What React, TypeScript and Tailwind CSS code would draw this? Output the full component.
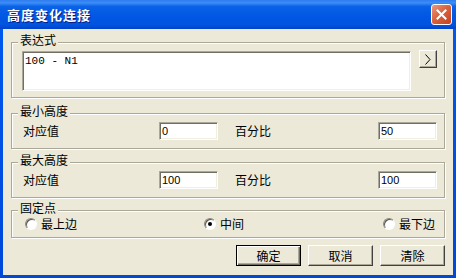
import React from 'react';

const cjk = "font-['SimSun','Noto_Sans_CJK_SC',sans-serif]";

function Group({ title, className, children }: { title: string; className?: string; children: React.ReactNode }) {
  return (
    <fieldset
      className={`border border-[#ACA899] shadow-[inset_1px_1px_0_#fff,1px_1px_0_#fff] ${className ?? ''}`}
    >
      <legend className="ml-[6px] px-[2px] pb-[4px] text-[12px] leading-[12px] text-black bg-[#ECE9D8]">
        {title}
      </legend>
      {children}
    </fieldset>
  );
}

function Field({ value }: { value: string }) {
  return (
    <input
      readOnly
      defaultValue={value}
      className="w-[59px] h-[18px] bg-white border border-t-[#ACA899] border-l-[#ACA899] border-r-white border-b-white shadow-[inset_1px_1px_0_#716F64,inset_-1px_-1px_0_#F1EFE2] pl-[2px] font-['Liberation_Sans',sans-serif] text-[11px] text-black outline-none"
    />
  );
}

function Radio({ checked, label }: { checked?: boolean; label: string }) {
  return (
    <div className="flex items-center gap-[4px]">
      <div className="w-[12px] h-[12px] rounded-full bg-white border border-t-[#8C8A7D] border-l-[#8C8A7D] border-r-white border-b-white shadow-[inset_1px_1px_0_#5A5950] flex items-center justify-center">
        {checked && <div className="w-[4px] h-[4px] rounded-full bg-black" />}
      </div>
      <span className="text-[12px] leading-[12px]">{label}</span>
    </div>
  );
}

function Btn({ label, primary }: { label: string; primary?: boolean }) {
  return (
    <button
      className={
        primary
          ? 'w-[65px] h-[21px] bg-[#ECE9D8] border border-black shadow-[inset_1px_1px_0_#fff,inset_-1px_-1px_0_#716F64,inset_-2px_-2px_0_#ACA899] text-[12px] leading-[12px] text-black'
          : 'w-[65px] h-[21px] bg-[#ECE9D8] border border-t-white border-l-white border-r-[#404040] border-b-[#404040] shadow-[inset_-1px_-1px_0_#ACA899] text-[12px] leading-[12px] text-black'
      }
    >
      {label}
    </button>
  );
}

export default function App() {
  return (
    <div className={`w-[456px] h-[278px] flex flex-col bg-[#0054E3] ${cjk}`}>
      {/* Title bar */}
      <div className="h-[29px] flex items-center pl-[7px] pr-[4px] bg-[linear-gradient(to_bottom,#2F7BEF_0%,#3D8EF8_10%,#0A62E6_22%,#0058E4_55%,#0053DE_85%,#0043CB_100%)]">
        <span className="text-[13px] leading-[13px] font-bold tracking-[1px] text-white [text-shadow:1px_1px_0_#0A1A80]">
          高度变化连接
        </span>
        <div className="ml-auto w-[21px] h-[21px] rounded-[3px] border border-white bg-[linear-gradient(135deg,#E99A7E_0%,#D9643F_45%,#C4401F_100%)] flex items-center justify-center">
          <svg width="11" height="11" viewBox="0 0 11 11">
            <path d="M1.5 1.5 L9.5 9.5 M9.5 1.5 L1.5 9.5" stroke="#fff" strokeWidth="2" strokeLinecap="square" />
          </svg>
        </div>
      </div>

      {/* Frame + client */}
      <div className="flex-1 flex px-[3px] pb-[3px] bg-[linear-gradient(to_bottom,#0058EE,#0048D8)]">
        <div className="flex-1 bg-[#ECE9D8] flex flex-col px-[8px] text-black">
          <Group title="表达式" className="mt-[5px]">
            <div className="flex items-start pl-[10px] pb-[6px]">
              <textarea
                readOnly
                defaultValue="100 - N1"
                className="mt-[1px] w-[389px] h-[40px] resize-none bg-white border border-t-[#ACA899] border-l-[#ACA899] border-r-white border-b-white shadow-[inset_1px_1px_0_#716F64,inset_-1px_-1px_0_#F1EFE2] pl-[2px] pt-[3px] font-['Liberation_Mono',monospace] text-[11px] leading-[12px] text-black outline-none"
              />
              <button className="ml-[8px] w-[18px] h-[18px] bg-[#ECE9D8] border border-t-white border-l-white border-r-[#404040] border-b-[#404040] shadow-[inset_-1px_-1px_0_#ACA899] flex items-center justify-center">
                <svg width="6" height="11" viewBox="0 0 6 11">
                  <path d="M0.5 0.5 L5 5.5 L0.5 10.5" fill="none" stroke="#000" strokeWidth="1" />
                </svg>
              </button>
            </div>
          </Group>

          <Group title="最小高度" className="mt-[7px]">
            <div className="flex items-center pl-[11px] pt-[1px] pb-[8px] text-[12px] leading-[12px]">
              <span className="w-[136px]">对应值</span>
              <Field value="0" />
              <span className="ml-[17px] w-[143px]">百分比</span>
              <Field value="50" />
            </div>
          </Group>

          <Group title="最大高度" className="mt-[5px]">
            <div className="flex items-center pl-[11px] pt-[1px] pb-[8px] text-[12px] leading-[12px]">
              <span className="w-[136px]">对应值</span>
              <Field value="100" />
              <span className="ml-[17px] w-[143px]">百分比</span>
              <Field value="100" />
            </div>
          </Group>

          <Group title="固定点" className="mt-[4px]">
            <div className="flex items-center pl-[13px] pb-[7px]">
              <div className="w-[179px]">
                <Radio label="最上边" />
              </div>
              <div className="w-[179px]">
                <Radio checked label="中间" />
              </div>
              <Radio label="最下边" />
            </div>
          </Group>

          <div className="mt-[7px] flex justify-end gap-[7px]">
            <Btn label="确定" primary />
            <Btn label="取消" />
            <Btn label="清除" />
          </div>
        </div>
      </div>
    </div>
  );
}
